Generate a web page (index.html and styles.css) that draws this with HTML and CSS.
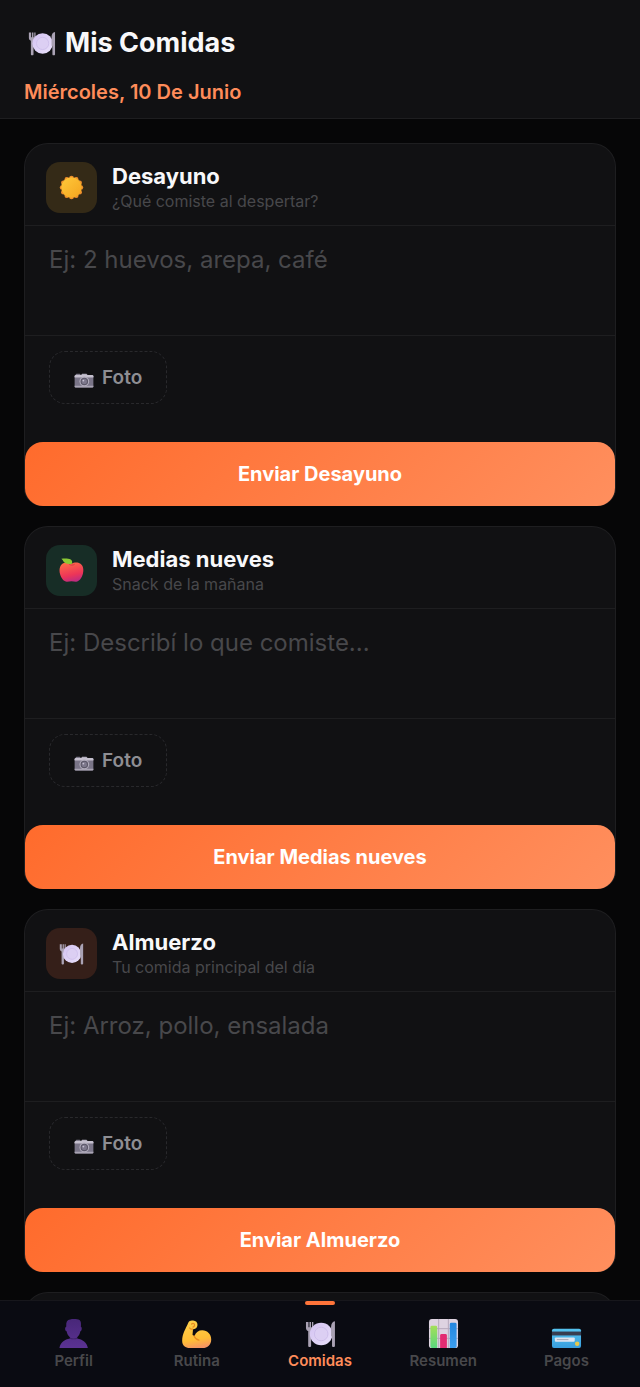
FILE: index.html
```
<!DOCTYPE html>
<html lang="es">
<head>
  <meta charset="UTF-8" />
  <meta name="viewport" content="width=device-width, initial-scale=1.0" />
  <title>Mis Comidas</title>
  <link rel="stylesheet" href="styles.css">
</head>
<body>
  <!-- Shared icons -->
  <svg class="sprite" aria-hidden="true">
    <defs>
      <linearGradient id="gPlate" x1="0" y1="0" x2="1" y2="1"><stop offset="0" stop-color="#d3c2f1"/><stop offset="1" stop-color="#e9e0fa"/></linearGradient>
      <linearGradient id="gSun" x1="0" y1="0" x2="1" y2="1"><stop offset="0" stop-color="#ffc83a"/><stop offset="1" stop-color="#f4a51f"/></linearGradient>
      <linearGradient id="gApple" x1="0.3" y1="0" x2="0.6" y2="1"><stop offset="0" stop-color="#ff6a48"/><stop offset="0.65" stop-color="#ed3558"/><stop offset="1" stop-color="#bd2b82"/></linearGradient>
      <linearGradient id="gUser" x1="0" y1="0" x2="0" y2="1"><stop offset="0" stop-color="#482779"/><stop offset="1" stop-color="#5b3292"/></linearGradient>
      <linearGradient id="gArm" x1="0.3" y1="0" x2="0.5" y2="1"><stop offset="0" stop-color="#ffd04a"/><stop offset="0.7" stop-color="#ffbd36"/><stop offset="1" stop-color="#f59563"/></linearGradient>
      <linearGradient id="gGreen" x1="0" y1="0" x2="0" y2="1"><stop offset="0" stop-color="#a4df58"/><stop offset="1" stop-color="#59d67e"/></linearGradient>
      <linearGradient id="gBlue" x1="0" y1="0" x2="0" y2="1"><stop offset="0" stop-color="#2487df"/><stop offset="1" stop-color="#3c9ff0"/></linearGradient>
      <linearGradient id="gCard" x1="0" y1="0" x2="0" y2="1"><stop offset="0" stop-color="#55c4f0"/><stop offset="1" stop-color="#389ede"/></linearGradient>
    </defs>
    <symbol id="i-plate" viewBox="0 0 32 32">
      <path d="M1 4v6c0 2 1 3 2.300 3.400V29c0 1.300 3 1.300 3 0V13.400C7.800 13 8.600 12 8.600 10V4H7.200v5.500h-1V4H4.600v5.500h-1V4z" fill="#aaa2b4"/>
      <circle cx="16.700" cy="16.500" r="11.700" fill="url(#gPlate)"/>
      <circle cx="16.700" cy="16.500" r="7" fill="#dccff3" stroke="#cdbeea" stroke-width="1"/>
      <path d="M30.900 3.300c-2.500.2-4 2.500-4 6V19h1v10c0 1.300 3 1.300 3 0z" fill="#aaa2b4"/>
    </symbol>
    <symbol id="i-sun" viewBox="0 0 32 32">
      <g fill="#ef8f2b">
        <circle cx="16" cy="4" r="3"/><circle cx="22" cy="5.600" r="3"/><circle cx="26.400" cy="10" r="3"/>
        <circle cx="28" cy="16" r="3"/><circle cx="26.400" cy="22" r="3"/><circle cx="22" cy="26.400" r="3"/>
        <circle cx="16" cy="28" r="3"/><circle cx="10" cy="26.400" r="3"/><circle cx="5.600" cy="22" r="3"/>
        <circle cx="4" cy="16" r="3"/><circle cx="5.600" cy="10" r="3"/><circle cx="10" cy="5.600" r="3"/>
      </g>
      <circle cx="16" cy="16" r="13" fill="url(#gSun)"/>
    </symbol>
    <symbol id="i-apple" viewBox="0 0 32 32">
      <path d="M16 7.500c3-2 8-2.500 11.500 0 4 3 4.300 8.500 3 13-1.500 5.500-5 9.700-8.500 9.900-2 .1-4-.7-6-.7s-4 .8-6 .7c-3.500-.2-7.300-4.200-8.700-9.900-1.200-5-.7-10 3-13 3.500-2.500 8.700-2 11.700 0z" fill="url(#gApple)"/>
      <path d="M13 8c2 1.500 5 1.500 7 0" fill="none" stroke="#c93a44" stroke-width="1"/>
      <path d="M3 1c4-.5 9-.6 12 1 1.800 1 2.200 3 1.700 5.200C13 8 8.500 7.800 6.300 5.200 5.300 4 4.500 2 3 1z" fill="#8bc934"/>
    </symbol>
    <symbol id="i-camera" viewBox="0 0 32 24">
      <rect x="3" y="1" width="7" height="4" rx="1" fill="#7c7888"/>
      <path d="M11 3.500 13 1h7l2 2.500z" fill="#b4afbe"/>
      <rect x="1" y="3" width="30" height="20" rx="2" fill="#7a7588"/>
      <path d="M1 7V5a2 2 0 0 1 2-2h26a2 2 0 0 1 2 2v2z" fill="#c5c0ce"/>
      <path d="M1 20.500h30v1a1.500 1.500 0 0 1-1.500 1.500h-27A1.500 1.500 0 0 1 1 21.500z" fill="#a9a4b3"/>
      <circle cx="16.500" cy="13.500" r="7.800" fill="#b2adbd"/>
      <circle cx="16.500" cy="13.500" r="6" fill="#5b5768"/>
      <circle cx="16.500" cy="13.500" r="4.200" fill="#7d788c"/>
      <circle cx="15" cy="12" r="1.400" fill="#c6c1d2"/>
    </symbol>
    <symbol id="i-user" viewBox="0 0 32 32">
      <path d="M8.500 8C8.200 4 9.500 1.800 12.500 1.500c2.500-.6 7.500-.6 9.700.5C24 3.300 23.800 6 23.600 9c1.400.3 1.200 4.300-.5 4.800-.4 2.700-1.700 4.800-3.300 6v1.400c5.500 1 10 4 11 9.800H1.500c1-5.700 5.300-8.800 10.800-9.800v-1.400c-1.700-1.200-3-3.300-3.400-6C7 13 6.900 9.300 8.500 9z" fill="url(#gUser)"/>
      <path d="M12.300 20c2.200 1.400 5.300 1.400 7.500 0v1.300c-2.500.8-5 .8-7.500 0z" fill="#3e2169"/>
    </symbol>
    <symbol id="i-arm" viewBox="0 0 32 32">
      <path d="M7.500 5C8.300 3 10.500 2.200 12.500 2.700c2.800.1 4.700 2 4.500 4.600 0 2.500-2 4.500-4.600 4.200l-.5 5.800c.6.900 1.200 1.200 2 1.200 1.400-3.700 4.400-5.800 8-5.800 5.300 0 9.300 4.300 9.300 9.400 0 5.500-3.700 8.900-9 8.900H9c-4.300 0-7.800-2.600-7.800-7.500C1.200 16.500 5 11 7.500 5z" fill="url(#gArm)"/>
      <path d="M11 6.200c1.400-1.300 3-.4 3 1 0 1-.6 1.800-1.600 2.200M13.500 18.500c1 2.400 2.700 3.800 5 4.300M12 11.500c-1.500.2-2.500-.3-3-1.200" fill="none" stroke="#e98b20" stroke-width="1.300" stroke-linecap="round"/>
    </symbol>
    <symbol id="i-chart" viewBox="0 0 32 32">
      <rect x="1" y="1" width="30" height="30" rx="3" fill="#ded3e1"/>
      <path d="M1 11h30M1 21h30M11 1v30M21 1v30" stroke="#b5a7ba" stroke-width="1"/>
      <path d="M2.500 9.500a1.500 1.500 0 0 1 1.500-1.500h4a1.500 1.500 0 0 1 1.500 1.500V31H4a1.500 1.500 0 0 1-1.500-1.500z" fill="url(#gGreen)"/>
      <path d="M12.500 18a1.500 1.500 0 0 1 1.500-1.500h4a1.500 1.500 0 0 1 1.500 1.500v13h-7z" fill="#e22b72"/>
      <path d="M22.500 6.500A1.500 1.500 0 0 1 24 5h4a1.500 1.500 0 0 1 1.500 1.500v23A1.500 1.500 0 0 1 28 31h-5.500z" fill="url(#gBlue)"/>
    </symbol>
    <symbol id="i-card" viewBox="0 0 32 32">
      <rect x="1" y="11" width="30" height="20" rx="2" fill="url(#gCard)"/>
      <rect x="1" y="14" width="30" height="4" fill="#373d50"/>
      <rect x="4" y="20" width="20.500" height="4.500" rx="1" fill="#dfe5f0"/>
      <path d="M6 22.300h12" stroke="#a6a5b5" stroke-width="1"/>
      <circle cx="27" cy="26.500" r="2.300" fill="#e5c84e"/>
    </symbol>
  </svg>

  <div class="app">
    <header class="app-header">
      <h1><svg class="title-icon" aria-hidden="true"><use href="#i-plate"/></svg>Mis Comidas</h1>
      <p class="date">Miércoles, 10 De Junio</p>
    </header>

    <main class="meals">
      <form class="meal-card">
        <div class="meal-head">
          <span class="meal-icon yellow"><svg aria-hidden="true"><use href="#i-sun"/></svg></span>
          <div>
            <h2><label for="desayuno">Desayuno</label></h2>
            <p>¿Qué comiste al despertar?</p>
          </div>
        </div>
        <textarea id="desayuno" placeholder="Ej: 2 huevos, arepa, café"></textarea>
        <div class="meal-foot">
          <button type="button" class="photo-btn"><svg aria-hidden="true"><use href="#i-camera"/></svg>Foto</button>
        </div>
        <button type="submit" class="send-btn">Enviar Desayuno</button>
      </form>

      <form class="meal-card">
        <div class="meal-head">
          <span class="meal-icon green"><svg aria-hidden="true"><use href="#i-apple"/></svg></span>
          <div>
            <h2><label for="medias">Medias nueves</label></h2>
            <p>Snack de la mañana</p>
          </div>
        </div>
        <textarea id="medias" placeholder="Ej: Describí lo que comiste..."></textarea>
        <div class="meal-foot">
          <button type="button" class="photo-btn"><svg aria-hidden="true"><use href="#i-camera"/></svg>Foto</button>
        </div>
        <button type="submit" class="send-btn">Enviar Medias nueves</button>
      </form>

      <form class="meal-card">
        <div class="meal-head">
          <span class="meal-icon orange"><svg aria-hidden="true"><use href="#i-plate"/></svg></span>
          <div>
            <h2><label for="almuerzo">Almuerzo</label></h2>
            <p>Tu comida principal del día</p>
          </div>
        </div>
        <textarea id="almuerzo" placeholder="Ej: Arroz, pollo, ensalada"></textarea>
        <div class="meal-foot">
          <button type="button" class="photo-btn"><svg aria-hidden="true"><use href="#i-camera"/></svg>Foto</button>
        </div>
        <button type="submit" class="send-btn">Enviar Almuerzo</button>
      </form>

      <div class="meal-card">
        <div class="meal-head"></div>
      </div>
    </main>

    <nav class="bottom-nav">
      <a href="#perfil"><svg aria-hidden="true"><use href="#i-user"/></svg>Perfil</a>
      <a href="#rutina"><svg aria-hidden="true"><use href="#i-arm"/></svg>Rutina</a>
      <a href="#comidas" class="active"><svg aria-hidden="true"><use href="#i-plate"/></svg>Comidas</a>
      <a href="#resumen"><svg aria-hidden="true"><use href="#i-chart"/></svg>Resumen</a>
      <a href="#pagos"><svg aria-hidden="true"><use href="#i-card"/></svg>Pagos</a>
    </nav>
  </div>
</body>
</html>
```

FILE: styles.css
```
* {
  box-sizing: border-box;
  margin: 0;
  padding: 0;
}
body {
  font-family: Inter, sans-serif;
  background: #060607;
  color: #f8f8fa;
}
.sprite {
  position: absolute;
  width: 0;
  height: 0;
}
.app {
  height: 100vh;
  display: flex;
  flex-direction: column;
}

/* Header */
.app-header {
  background: #111113;
  border-bottom: 1px solid #1e1e20;
  padding: 25px 24px 14px;
}
.app-header h1 {
  display: flex;
  align-items: center;
  gap: 9px;
  font-size: 27px;
  line-height: 36px;
  font-weight: 700;
  padding-left: 4px;
}
.title-icon {
  width: 28px;
  height: 28px;
}
.date {
  margin-top: 19px;
  font-size: 20px;
  line-height: 24px;
  font-weight: 600;
  color: #ff8c5a;
}

/* Meal cards */
.meals {
  flex: 1;
  min-height: 0;
  overflow-y: auto;
  scrollbar-width: none;
  padding: 24px 24px 0;
  display: flex;
  flex-direction: column;
  gap: 20px;
}
.meal-card {
  flex-shrink: 0;
  display: flex;
  flex-direction: column;
  background: #111113;
  border: 1px solid #1e1e20;
  border-bottom: none;
  border-radius: 24px 24px 18px 18px;
}
.meal-head {
  display: flex;
  align-items: center;
  gap: 15px;
  min-height: 82px;
  padding: 6px 21px 0;
  border-bottom: 1px solid #1e1e20;
}
.meal-icon {
  width: 51px;
  height: 51px;
  border-radius: 14px;
  display: flex;
  align-items: center;
  justify-content: center;
}
.meal-icon svg {
  width: 25px;
  height: 25px;
}
.yellow { background: #342a17; }
.green { background: #172d26; }
.orange { background: #351f19; }
.meal-head h2 {
  font-size: 22px;
  line-height: 28px;
  font-weight: 700;
}
.meal-head p {
  font-size: 16px;
  line-height: 23px;
  color: #48484b;
}
.meal-card textarea {
  display: block;
  width: 100%;
  height: 110px;
  padding: 18px 24px;
  border: none;
  border-bottom: 1px solid #1e1e20;
  outline: none;
  resize: none;
  background: transparent;
  color: #f8f8fa;
  font-family: inherit;
  font-size: 24px;
  line-height: 32px;
}
.meal-card textarea::placeholder {
  color: #48484b;
  opacity: 1;
}
.meal-foot {
  padding: 15px 24px 38px;
}
.photo-btn {
  display: flex;
  align-items: center;
  justify-content: center;
  gap: 8px;
  height: 53px;
  padding: 0 24px;
  border: 1px dashed #29292c;
  border-radius: 16px;
  background: transparent;
  color: #8e8e93;
  font-family: inherit;
  font-size: 19px;
  font-weight: 600;
  cursor: pointer;
}
.photo-btn svg {
  width: 20px;
  height: 15px;
  margin-top: 5px;
}
.send-btn {
  height: 64px;
  border: none;
  border-radius: 18px;
  background: linear-gradient(135deg, #ff6b2c, #ff8f5e);
  color: #fff;
  font-family: inherit;
  font-size: 20px;
  font-weight: 700;
  cursor: pointer;
}

/* Bottom navigation */
.bottom-nav {
  display: flex;
  height: 87px;
  padding: 0 12px;
  background: #0a0b12;
  border-top: 1px solid #17171c;
}
.bottom-nav a {
  flex: 1;
  position: relative;
  display: flex;
  flex-direction: column;
  align-items: center;
  gap: 2px;
  padding-top: 17px;
  color: #48484b;
  font-size: 15px;
  line-height: 20px;
  font-weight: 600;
  text-decoration: none;
}
.bottom-nav svg {
  width: 31px;
  height: 31px;
}
.bottom-nav .active {
  color: #ff8c5a;
}
.bottom-nav .active::before {
  content: "";
  position: absolute;
  top: 0;
  width: 30px;
  height: 4px;
  border-radius: 2px;
  background: #ff743a;
}
```
